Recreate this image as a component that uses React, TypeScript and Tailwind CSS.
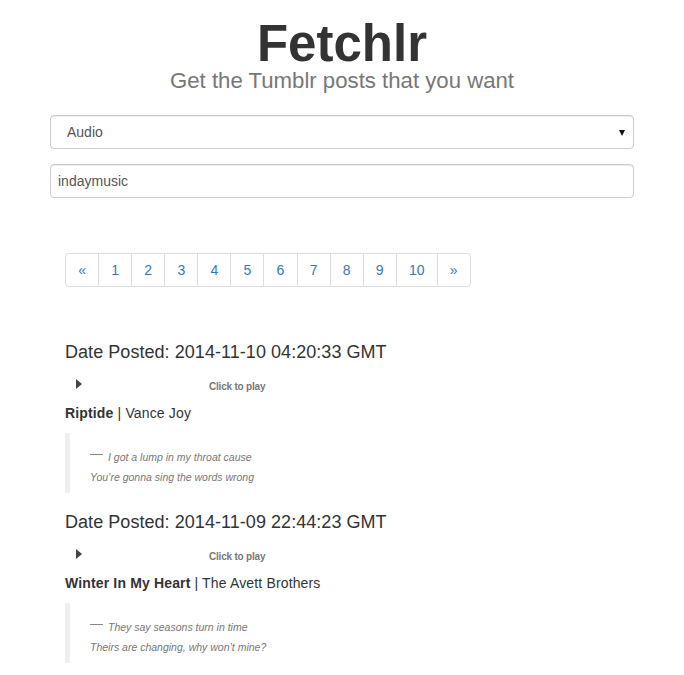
import React from 'react';

interface Post {
  date: string;
  title: string;
  artist: string;
  lines: string[];
}

const posts: Post[] = [
  {
    date: '2014-11-10 04:20:33 GMT',
    title: 'Riptide',
    artist: 'Vance Joy',
    lines: ['I got a lump in my throat cause', 'You\u2019re gonna sing the words wrong'],
  },
  {
    date: '2014-11-09 22:44:23 GMT',
    title: 'Winter In My Heart',
    artist: 'The Avett Brothers',
    lines: ['They say seasons turn in time', 'Theirs are changing, why won\u2019t mine?'],
  },
];

const pages = ['\u00ab', '1', '2', '3', '4', '5', '6', '7', '8', '9', '10', '\u00bb'];

const AudioPost: React.FC<{ post: Post }> = ({ post }) => (
  <div className="flex flex-col">
    <h3 className="text-[18px] leading-[20px] text-[#333] tracking-[0.05px]">Date Posted: {post.date}</h3>
    <div className="flex items-start h-[14px] mt-[14px]">
      <span className="ml-[11px] mt-[2.5px] w-0 h-0 border-y-[5.5px] border-y-transparent border-l-[6px] border-l-[#444]"></span>
      <span className="ml-[127px] mt-[6px] text-[10px] leading-[10px] font-bold tracking-[-0.2px] text-[#777]">Click to play</span>
    </div>
    <p className="mt-[13px] text-[14px] leading-[20px] text-[#333] tracking-[0.15px]">
      <strong className="font-bold">{post.title}</strong> | {post.artist}
    </p>
    <blockquote className="mt-[10px] border-l-[5px] border-[#eee] pl-[20px] pt-[14px] pb-[6px] text-[10.5px] leading-[20px] italic text-[#777]">
      <div className="flex items-start">
        <span className="inline-block w-[13px] h-px bg-[#888] mt-[7px] mr-[5px]"></span>
        <span>{post.lines[0]}</span>
      </div>
      <div>{post.lines[1]}</div>
    </blockquote>
  </div>
);

export default function App() {
  return (
    <div className="min-h-screen bg-white" style={{ fontFamily: '"Liberation Sans", Arial, sans-serif' }}>
      <div className="w-[584px] mx-auto flex flex-col">
        <h1 className="mt-[18px] text-center text-[51px] leading-[51px] font-bold text-[#333]">Fetchlr</h1>
        <p className="mt-[1px] text-center text-[22.2px] leading-[22px] text-[#777]">Get the Tumblr posts that you want</p>

        <div className="mt-[23px] h-[34px] flex items-center justify-between border border-[#ccc] rounded-[4px] pl-[16px] pr-[8px] text-[14px] text-[#555] shadow-[inset_0_1px_1px_rgba(0,0,0,0.075)]">
          <span>Audio</span>
          <span className="w-0 h-0 border-x-[3.5px] border-x-transparent border-t-[6px] border-t-[#111] mt-[1px]"></span>
        </div>

        <div className="mt-[15px] h-[34px] flex items-center border border-[#ccc] rounded-[4px] pl-[7px] text-[14px] text-[#555] shadow-[inset_0_1px_1px_rgba(0,0,0,0.075)]">
          indaymusic
        </div>

        <div className="pl-[15px] mt-[55px] flex flex-col">
          <ul className="flex">
            {pages.map((p, i) => (
              <li
                key={p}
                className={`px-[12.15px] py-1.5 text-[14px] leading-5 text-[#337ab7] border border-[#ddd] bg-white ${i === 0 ? 'rounded-l-[4px]' : '-ml-px'} ${i === pages.length - 1 ? 'rounded-r-[4px]' : ''}`}
              >
                {p}
              </li>
            ))}
          </ul>

          <div className="mt-[55px] flex flex-col gap-[19px]">
            {posts.map((post) => (
              <AudioPost key={post.date} post={post} />
            ))}
          </div>
        </div>
      </div>
    </div>
  );
}
